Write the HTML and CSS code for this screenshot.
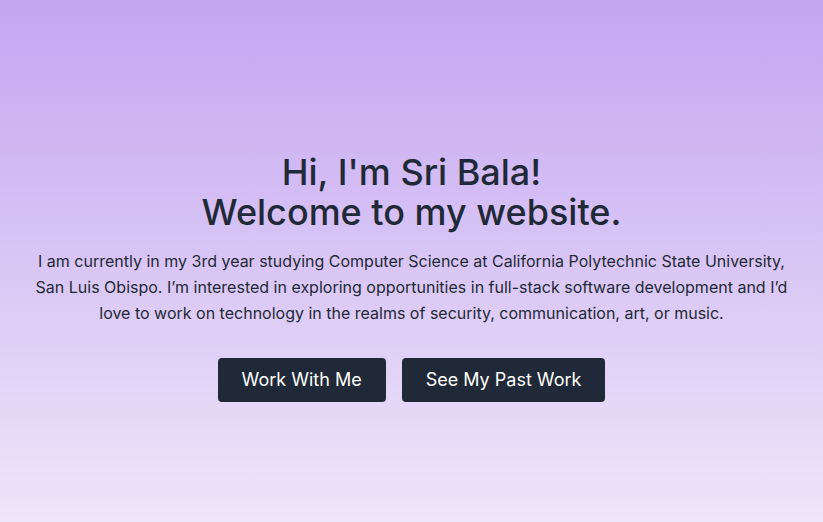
FILE: index.html
```html
<!DOCTYPE html>
<html lang="en">
<head>
<meta charset="utf-8">
<title>Sri Bala</title>
<link rel="stylesheet" href="styles.css">
</head>
<body>
<main class="hero">
  <div class="content">
    <h1 class="title">Hi, I'm Sri Bala!<br>Welcome to my website.</h1>
    <p class="intro">I am currently in my 3rd year studying Computer Science at California Polytechnic State University, San Luis Obispo. I’m interested in exploring opportunities in full-stack software development and I’d love to work on technology in the realms of security, communication, art, or music.</p>
    <div class="actions">
      <a class="btn" href="#">Work With Me</a>
      <a class="btn" href="#">See My Past Work</a>
    </div>
  </div>
</main>
</body>
</html>
```
FILE: styles.css
```css
* { box-sizing: border-box; }
html, body { margin: 0; padding: 0; }
body {
  font-family: Inter, "Noto Sans", sans-serif;
  color: #1f2937;
  background: linear-gradient(to bottom, #c4a5f1, #eee6f9);
  min-height: 100vh;
}
.hero {
  min-height: 522px;
  display: flex;
  justify-content: center;
  padding-top: 152px;
}
.content {
  width: 768px;
  text-align: center;
}
.title {
  margin: 0;
  font-size: 36px;
  line-height: 40px;
  font-weight: 500;
}
.intro {
  margin: 16px 0 0;
  font-size: 16px;
  line-height: 26px;
}
.actions {
  margin-top: 32px;
  display: flex;
  justify-content: center;
  gap: 16px;
}
.btn {
  display: inline-block;
  background: #1f2937;
  color: #fff;
  text-decoration: none;
  font-size: 18px;
  line-height: 28px;
  padding: 8px 24px;
  border-radius: 4px;
}
```
